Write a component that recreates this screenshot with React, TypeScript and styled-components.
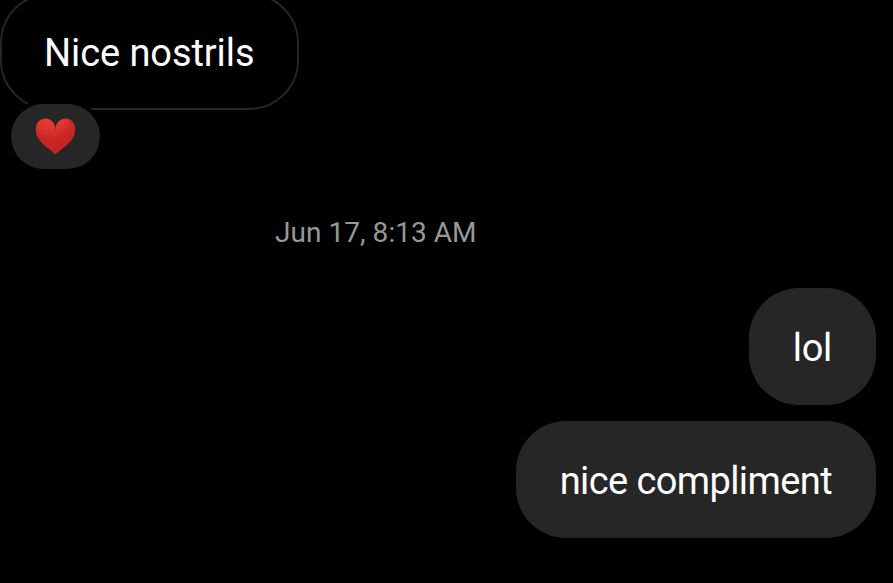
import React from 'react';
import styled, { createGlobalStyle } from 'styled-components';

const GlobalStyle = createGlobalStyle`
  * {
    box-sizing: border-box;
  }
  body {
    margin: 0;
    background: #000;
  }
`;

const Thread = styled.main`
  display: flex;
  flex-direction: column;
  height: 583px;
  overflow: hidden;
  background: #000;
  font-family: Roboto, sans-serif;
`;

const Received = styled.div`
  display: flex;
  flex-direction: column;
  align-items: flex-start;
  margin-top: -7px;
`;

const Sent = styled.div`
  display: flex;
  flex-direction: column;
  align-items: flex-end;
  gap: 16px;
  padding-right: 17px;
`;

const Bubble = styled.div<{ $outlined?: boolean; $tracking: number }>`
  display: flex;
  align-items: center;
  height: 117px;
  padding: ${props => (props.$outlined ? '2px 43px 0 42px' : '2px 44px 0')};
  border: ${props => (props.$outlined ? '2px solid #262626' : 'none')};
  border-radius: 50px;
  background: ${props => (props.$outlined ? '#000' : '#262626')};
  color: #fff;
  font-size: 38px;
  letter-spacing: ${props => props.$tracking}px;
  line-height: 46px;
  white-space: nowrap;
`;

const Reaction = styled.div`
  display: flex;
  align-items: center;
  justify-content: center;
  width: 89px;
  height: 65px;
  margin: -6px 0 0 11px;
  border-radius: 33px;
  background: #262626;
  box-shadow: 0 0 0 4px #000;
  z-index: 1;
`;

const Timestamp = styled.time`
  margin: 47px 0 39px 275px;
  color: #979797;
  font-size: 28px;
  letter-spacing: 0.05px;
  line-height: 33px;
`;

const Heart = () => (
  <svg width="41" height="37" viewBox="0 0 41 37" aria-label="Heart">
    <defs>
      <radialGradient id="heart" gradientUnits="userSpaceOnUse" cx="17" cy="-2" r="36">
        <stop offset="0" stopColor="#ec3d38" />
        <stop offset="0.35" stopColor="#e23632" />
        <stop offset="0.68" stopColor="#c82523" />
        <stop offset="1" stopColor="#c42220" />
      </radialGradient>
    </defs>
    <path
      fill="url(#heart)"
      d="M20.5 9.5C19 4 15.5 0.4 10.6 0.4C4.8 0.4 0.8 4.8 0.8 11.2C0.8 20.5 7.5 26 13.5 30.6C16 32.6 18.6 35 20.5 36.4C22.4 35 25 32.6 27.5 30.6C33.5 26 40.2 20.5 40.2 11.2C40.2 4.8 36.2 0.4 30.4 0.4C25.5 0.4 22 4 20.5 9.5Z"
    />
    <path fill="none" stroke="#b51f1e" strokeWidth="0.8" strokeLinecap="round" d="M20.5 9.3V11.5" />
  </svg>
);

const App: React.FC = () => {
  return (
    <>
      <GlobalStyle />
      <Thread>
        <Received>
          <Bubble $outlined $tracking={-0.08}>Nice nostrils</Bubble>
          <Reaction>
            <Heart />
          </Reaction>
        </Received>
        <Timestamp>Jun 17, 8:13 AM</Timestamp>
        <Sent>
          <Bubble $tracking={-0.3}>lol</Bubble>
          <Bubble $tracking={-0.6}>nice compliment</Bubble>
        </Sent>
      </Thread>
    </>
  );
};

export default App;
